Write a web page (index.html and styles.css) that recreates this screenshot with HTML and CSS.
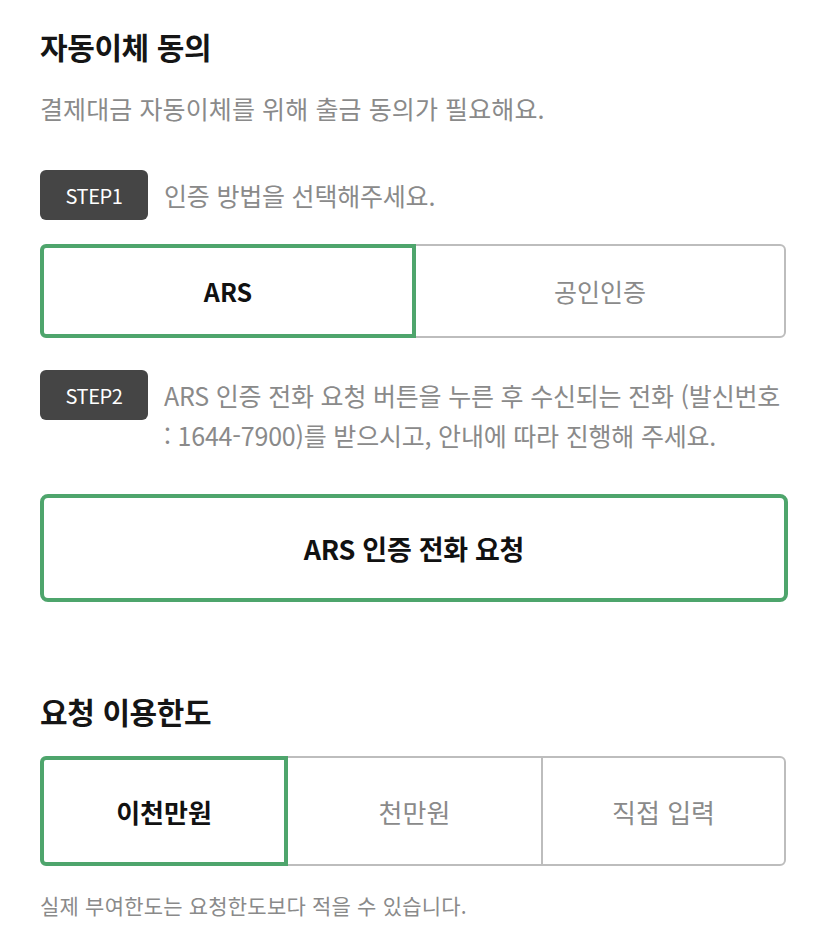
FILE: index.html
```html
<!DOCTYPE html>
<html lang="ko">
<head>
	<meta charset="utf-8">
	<meta name="viewport" content="width=device-width, initial-scale=1">
	<title>자동이체 동의</title>
	<link rel="stylesheet" href="styles.css">
</head>
<body>
	<!-- auto debit consent -->
	<section class="consent">
		<h1 class="title">자동이체 동의</h1>
		<p class="desc">결제대금 자동이체를 위해 출금 동의가 필요해요.</p>

		<div class="step step-first">
			<span class="badge">STEP1</span>
			<p class="step-text">인증 방법을 선택해주세요.</p>
		</div>

		<div class="segment segment-auth">
			<button class="segment-item is-selected">ARS</button>
			<button class="segment-item">공인인증</button>
		</div>

		<div class="step step-second">
			<span class="badge">STEP2</span>
			<p class="step-text">ARS 인증 전화 요청 버튼을 누른 후 수신되는 전화 (발신번호<br>: 1644-7900)를 받으시고, 안내에 따라 진행해 주세요.</p>
		</div>

		<button class="call-button">ARS 인증 전화 요청</button>
	</section>

	<!-- requested limit -->
	<section class="limit">
		<h2 class="title">요청 이용한도</h2>
		<div class="segment segment-limit">
			<button class="segment-item is-selected">이천만원</button>
			<button class="segment-item">천만원</button>
			<button class="segment-item">직접 입력</button>
		</div>
		<p class="note">실제 부여한도는 요청한도보다 적을 수 있습니다.</p>
	</section>
</body>
</html>
```

FILE: styles.css
```css
* {
  box-sizing: border-box;
  padding: 0;
  margin: 0;
}
body {
  background: #fff;
  color: #111;
  font-family: "Noto Sans CJK KR", "Noto Sans", sans-serif;
  padding: 0 40px;
}
button {
  font-family: inherit;
  background: #fff;
  cursor: pointer;
}

.title {
  font-size: 30px;
  font-weight: 700;
  line-height: 40px;
  letter-spacing: -0.4px;
  color: #151515;
}
.consent .title {
  margin-top: 26px;
}
.desc {
  margin-top: 25px;
  font-size: 25px;
  line-height: 34px;
  letter-spacing: 0.1px;
  color: #8a8a8a;
}

/* step rows: dark badge + grey copy */
.step {
  display: flex;
  align-items: flex-start;
  gap: 16px;
}
.step-first {
  margin-top: 45px;
}
.step-second {
  margin-top: 32px;
}
.badge {
  flex-shrink: 0;
  width: 108px;
  height: 50px;
  display: flex;
  justify-content: center;
  align-items: center;
  background: #454545;
  border-radius: 6px;
  color: #fff;
  font-size: 20px;
  letter-spacing: -0.4px;
}
.step-text {
  padding-top: 5px;
  font-size: 25px;
  line-height: 40px;
  letter-spacing: -0.2px;
  color: #8a8a8a;
  white-space: nowrap;
}

/* segmented control, selected item gets the green frame */
.segment {
  display: flex;
  width: calc(100% - 2px);
  margin-top: 24px;
}
.segment-item {
  flex: 1;
  display: flex;
  justify-content: center;
  align-items: center;
  border: 2px solid #bdbdbd;
  margin-left: -2px;
  font-size: 25px;
  color: #8a8a8a;
}
.segment-item:first-child {
  margin-left: 0;
  border-radius: 6px 0 0 6px;
}
.segment-item:last-child {
  border-radius: 0 6px 6px 0;
}
.segment-item.is-selected {
  position: relative;
  z-index: 1;
  border: 4px solid #4ea56c;
  color: #111;
  font-weight: 700;
}
.segment-auth .segment-item {
  height: 94px;
}
.segment-limit {
  margin-top: 25px;
}
.segment-limit .segment-item {
  height: 110px;
  font-size: 26px;
}
.segment-limit .segment-item:nth-child(1) {
  flex: 0 0 248px;
}
.segment-limit .segment-item:nth-child(2) {
  flex: 0 0 257px;
}

.call-button {
  display: block;
  width: 100%;
  height: 108px;
  margin-top: 39px;
  border: 4px solid #4ea56c;
  border-radius: 8px;
  font-size: 27px;
  font-weight: 700;
  letter-spacing: -0.3px;
  color: #111;
}

.limit .title {
  margin-top: 89px;
}
.note {
  margin-top: 25px;
  font-size: 21px;
  line-height: 28px;
  letter-spacing: 0.2px;
  color: #8a8a8a;
}
```
